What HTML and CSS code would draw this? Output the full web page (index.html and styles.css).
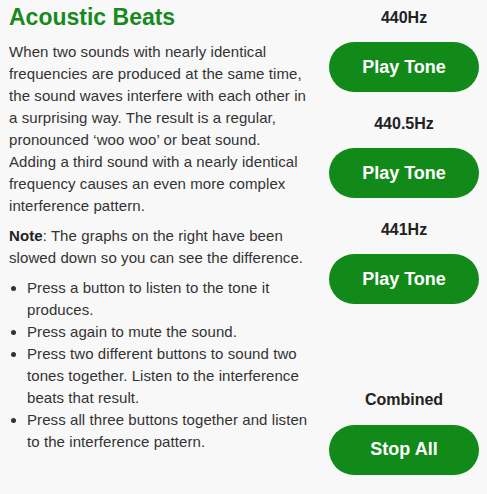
FILE: index.html
```html
<!DOCTYPE html>
<html lang="en">
<head>
<meta charset="utf-8">
<title>Acoustic Beats</title>
<link rel="stylesheet" href="styles.css">
</head>
<body>
<div class="page">
  <div class="text">
    <h1 class="title">Acoustic Beats</h1>
    <p class="para">When two sounds with nearly identical frequencies are produced at the same time, the sound waves interfere with each other in a surprising way. The result is a regular, pronounced ‘woo woo’ or beat sound.<br>Adding a third sound with a nearly identical frequency causes an even more complex interference pattern.</p>
    <p class="para"><strong>Note</strong>: The graphs on the right have been slowed down so you can see the difference.</p>
    <ul class="steps">
      <li>Press a button to listen to the tone it produces.</li>
      <li>Press again to mute the sound.</li>
      <li>Press two different buttons to sound two tones together. Listen to the interference beats that result.</li>
      <li>Press all three buttons together and listen to the interference pattern.</li>
    </ul>
  </div>
  <div class="controls">
    <div class="group">
      <div class="label">440Hz</div>
      <button class="btn">Play Tone</button>
    </div>
    <div class="group">
      <div class="label">440.5Hz</div>
      <button class="btn">Play Tone</button>
    </div>
    <div class="group">
      <div class="label">441Hz</div>
      <button class="btn">Play Tone</button>
    </div>
    <div class="group combined">
      <div class="label">Combined</div>
      <button class="btn">Stop All</button>
    </div>
  </div>
</div>
</body>
</html>
```

FILE: styles.css
```css
body {
  margin: 0;
  background: #f8f8f8;
  font-family: "Liberation Sans", Arial, sans-serif;
  color: #333;
}
.page {
  display: flex;
  align-items: flex-start;
  justify-content: space-between;
  padding: 0 8px 0 9px;
}
.text {
  width: 307px;
  flex: none;
}
.title {
  font-size: 23px;
  line-height: 28px;
  font-weight: bold;
  margin: 3px 0 10px;
  color: #178a1e;
}
.para {
  font-size: 15px;
  line-height: 22px;
  letter-spacing: 0.08px;
  margin: 0 0 8px;
}
.para strong {
  color: #222;
}
.steps {
  margin: 7px 0 0;
  padding-left: 18px;
  font-size: 15px;
  line-height: 22px;
  letter-spacing: 0.08px;
}
.controls {
  width: 150px;
  flex: none;
  display: flex;
  flex-direction: column;
  padding-top: 7.5px;
}
.group + .group {
  margin-top: 21.5px;
}
.group.combined {
  margin-top: 86px;
}
.label {
  font-size: 16px;
  font-weight: bold;
  line-height: 20px;
  text-align: center;
  color: #222;
  margin-bottom: 14.5px;
}
.btn {
  display: block;
  width: 150px;
  height: 50px;
  border: none;
  border-radius: 25px;
  background: #128a1a;
  color: #fff;
  font-family: "Liberation Sans", Arial, sans-serif;
  font-size: 18px;
  font-weight: bold;
  padding: 0;
}
```
